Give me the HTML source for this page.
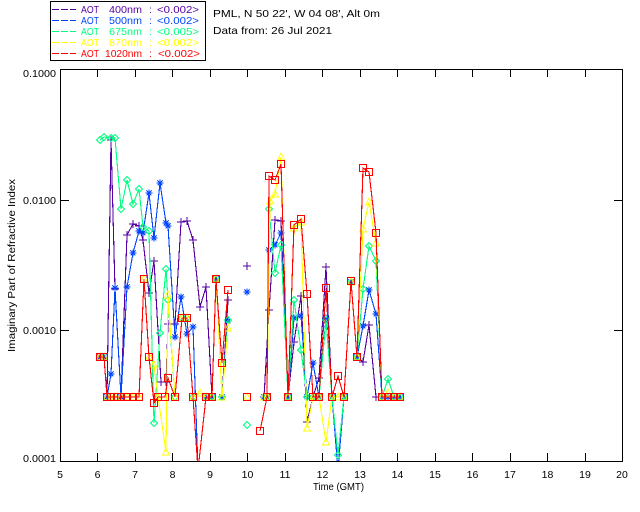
<!DOCTYPE html>
<html>
<head>
<meta charset="utf-8">
<style>
html,body{margin:0;padding:0;background:#fff;width:640px;height:512px;overflow:hidden}
svg{display:block}
text{font-family:"Liberation Sans",sans-serif;font-size:10.5px;fill:#000}
.a{shape-rendering:crispEdges}
.s{fill:none;stroke-width:1.1;stroke-linejoin:miter;shape-rendering:crispEdges}
.p{stroke:#5500a0;marker:url(#mp)}
.b{stroke:#0044ff;marker:url(#mb)}
.g{stroke:#00ff80;marker:url(#mg)}
.y{stroke:#ffff00;marker:url(#my)}
.r{stroke:#ff0000;marker:url(#mr)}
</style>
</head>
<body>
<svg width="640" height="512" viewBox="0 0 640 512" xmlns="http://www.w3.org/2000/svg">
<defs>
<clipPath id="c"><rect x="60" y="70" width="562" height="391"/></clipPath>
<marker id="mp" markerUnits="userSpaceOnUse" markerWidth="12" markerHeight="12" refX="6" refY="6" overflow="visible"><path d="M2 6H10M6 2V10" fill="none" stroke="#5500a0" stroke-width="1" shape-rendering="crispEdges"/></marker>
<marker id="mb" markerUnits="userSpaceOnUse" markerWidth="12" markerHeight="12" refX="6" refY="6" overflow="visible"><path d="M2.5 6H9.5M6 2.5V9.5M3.5 3.5L8.5 8.5M8.5 3.5L3.5 8.5" fill="none" stroke="#0044ff" stroke-width="1.2" shape-rendering="crispEdges"/></marker>
<marker id="mg" markerUnits="userSpaceOnUse" markerWidth="12" markerHeight="12" refX="6" refY="6" overflow="visible"><path d="M6 2.5L9.5 6L6 9.5L2.5 6Z" fill="none" stroke="#00ff80" stroke-width="1" shape-rendering="crispEdges"/></marker>
<marker id="my" markerUnits="userSpaceOnUse" markerWidth="12" markerHeight="12" refX="6" refY="6" overflow="visible"><path d="M6 2L9.5 9H2.5Z" fill="none" stroke="#ffff00" stroke-width="1" shape-rendering="crispEdges"/></marker>
<marker id="mr" markerUnits="userSpaceOnUse" markerWidth="12" markerHeight="12" refX="6" refY="6" overflow="visible"><rect x="2.5" y="2.5" width="7" height="7" fill="none" stroke="#ff0000" stroke-width="1" shape-rendering="crispEdges"/></marker>
</defs>

<!-- legend -->
<rect class="a" x="50.5" y="1.5" width="155" height="59" fill="#fff" stroke="#000" stroke-width="1"/>
<g class="a" fill="none" stroke-width="1" stroke-dasharray="7 2">
<path d="M52 9.5H76" stroke="#5500a0"/>
<path d="M52 20.5H76" stroke="#0044ff"/>
<path d="M52 31.5H76" stroke="#00ff80"/>
<path d="M52 42.5H76" stroke="#ffff00"/>
<path d="M52 53.5H76" stroke="#ff0000"/>
</g>
<g style="fill:#5500a0"><text style="fill:inherit" x="81" y="13" textLength="18" lengthAdjust="spacingAndGlyphs">AOT</text><text style="fill:inherit" x="109" y="13" textLength="33" lengthAdjust="spacingAndGlyphs">400nm</text><text style="fill:inherit" x="149" y="13">:</text><text style="fill:inherit" x="157" y="13" textLength="42" lengthAdjust="spacingAndGlyphs">&lt;0.002&gt;</text></g>
<g style="fill:#0044ff"><text style="fill:inherit" x="81" y="24" textLength="18" lengthAdjust="spacingAndGlyphs">AOT</text><text style="fill:inherit" x="109" y="24" textLength="33" lengthAdjust="spacingAndGlyphs">500nm</text><text style="fill:inherit" x="149" y="24">:</text><text style="fill:inherit" x="157" y="24" textLength="42" lengthAdjust="spacingAndGlyphs">&lt;0.002&gt;</text></g>
<g style="fill:#00ff80"><text style="fill:inherit" x="81" y="35" textLength="18" lengthAdjust="spacingAndGlyphs">AOT</text><text style="fill:inherit" x="109" y="35" textLength="33" lengthAdjust="spacingAndGlyphs">675nm</text><text style="fill:inherit" x="149" y="35">:</text><text style="fill:inherit" x="157" y="35" textLength="42" lengthAdjust="spacingAndGlyphs">&lt;0.005&gt;</text></g>
<g style="fill:#ffff00"><text style="fill:inherit" x="81" y="46" textLength="18" lengthAdjust="spacingAndGlyphs">AOT</text><text style="fill:inherit" x="109" y="46" textLength="33" lengthAdjust="spacingAndGlyphs">870nm</text><text style="fill:inherit" x="149" y="46">:</text><text style="fill:inherit" x="157" y="46" textLength="42" lengthAdjust="spacingAndGlyphs">&lt;0.002&gt;</text></g>
<g style="fill:#ff0000"><text style="fill:inherit" x="81" y="57" textLength="18" lengthAdjust="spacingAndGlyphs">AOT</text><text style="fill:inherit" x="105" y="57" textLength="37" lengthAdjust="spacingAndGlyphs">1020nm</text><text style="fill:inherit" x="149" y="57">:</text><text style="fill:inherit" x="158" y="57" textLength="42" lengthAdjust="spacingAndGlyphs">&lt;0.002&gt;</text></g>

<text x="213" y="17" textLength="167" lengthAdjust="spacingAndGlyphs">PML, N 50 22', W 04 08', Alt 0m</text>
<text x="213" y="34" textLength="119" lengthAdjust="spacingAndGlyphs">Data from: 26 Jul 2021</text>

<!-- data -->
<g clip-path="url(#c)">
<polyline class="s p" points="100,357 104,357 107,397 111,140 115,289 121,397 127,235 133,224 139,226 143,240 149,293 154,261 161,382 166,382 168,324 175,324 181,222 187,221 193,240 200,307 206,287 212,397 216,279 222,397 228,300"/>
<polyline class="s p" points="247,266 247,266"/>
<polyline class="s p" points="264,397 269,310 275,220 281,221 288,397 294,342 301,296 307,422 313,397 319,378 326,267 332,397 338,470 344,397 351,282 357,357 363,362 369,325 376,397 382,397 388,397 394,397 400,397"/>

<polyline class="s b" points="100,357 104,357 107,397 111,374 115,288 121,397 127,287 133,253 139,231 143,233 149,193 154,238 160,183 166,223 168,226 175,337 181,297 187,334 193,327 198,470 206,397 212,397 216,279 222,397 228,321"/>
<polyline class="s b" points="247,292 247,292"/>
<polyline class="s b" points="264,397 267,397 269,250 275,245 281,233 288,397 294,318 301,316 307,397 313,363 319,397 326,318 332,397 338,470 344,397 351,282 357,357 363,326 369,290 376,314 382,397 388,397 394,397 400,397"/>

<polyline class="s g" points="100,140 104,137 111,138 115,138 121,209 127,180 133,204 139,189 143,227 149,231 154,423 160,333 166,269 168,300 175,397 182,318 187,318 193,397 198,470 206,397 212,397 216,279 222,397 228,320"/>
<polyline class="s g" points="247,425 247,425"/>
<polyline class="s g" points="267,397 269,209 275,273 281,245 288,397 294,300 301,350 307,397 313,397 319,397 326,320 332,397 338,455 344,397 351,282 357,357 363,289 369,246 376,261 382,397 388,379 394,397 400,397"/>

<polyline class="s y" points="100,357 104,357 107,397 111,397 115,397 121,397 127,397 133,397 139,397 144,279 149,357 154,365 158,397 166,452 168,295 175,397 182,318 187,318 193,397 200,393 206,397 212,397 216,279 222,397 228,328"/>
<polyline class="s y" points="247,397 247,397"/>
<polyline class="s y" points="264,397 267,397 270,201 275,194 281,157 288,397 294,228 301,222 307,428 313,397 319,397 326,442 332,397 338,397 344,397 351,282 357,357 363,229 369,202 376,243 382,397 388,393 394,397 400,397"/>

<polyline class="s r" points="100,357 104,357 107,397 111,397 117,397 121,397 127,397 133,397 139,397 144,279 149,357 154,403 158,397 165,397 168,378 175,397 182,318 187,318 193,397 198,470 206,397 212,397 216,279 222,363 228,290"/>
<polyline class="s r" points="247,397 247,397"/>
<polyline class="s r" points="260,431 267,397 269,176 275,180 281,164 288,397 294,225 301,219 307,294 313,397 319,397 326,288 332,397 338,376 344,397 351,281 357,357 363,168 369,172 376,233 382,397 388,397 394,397 400,397"/>
</g>

<!-- axes -->
<path class="a" fill="none" stroke="#000" stroke-width="1" d="M60.5 69.5H622.5V461.5H60.5Z
M97.5 70V77M135.5 70V77M172.5 70V77M210.5 70V77M247.5 70V77M285.5 70V77M322.5 70V77M360.5 70V77M397.5 70V77M435.5 70V77M472.5 70V77M510.5 70V77M547.5 70V77M585.5 70V77
M97.5 461V453M135.5 461V453M172.5 461V453M210.5 461V453M247.5 461V453M285.5 461V453M322.5 461V453M360.5 461V453M397.5 461V453M435.5 461V453M472.5 461V453M510.5 461V453M547.5 461V453M585.5 461V453
M61 200.5H69M61 330.5H69M622 200.5H614M622 330.5H614"/>

<g>
<text x="23" y="77" textLength="33" lengthAdjust="spacingAndGlyphs">0.1000</text>
<text x="23" y="204" textLength="33" lengthAdjust="spacingAndGlyphs">0.0100</text>
<text x="23" y="334" textLength="33" lengthAdjust="spacingAndGlyphs">0.0010</text>
<text x="23" y="462" textLength="33" lengthAdjust="spacingAndGlyphs">0.0001</text>
</g>
<g text-anchor="middle">
<text x="60" y="478">5</text><text x="97.5" y="478">6</text><text x="135" y="478">7</text><text x="172.5" y="478">8</text><text x="210" y="478">9</text><text x="247.5" y="478">10</text><text x="285" y="478">11</text><text x="322.5" y="478">12</text><text x="360" y="478">13</text><text x="397.5" y="478">14</text><text x="435" y="478">15</text><text x="472.5" y="478">16</text><text x="510" y="478">17</text><text x="547.5" y="478">18</text><text x="585" y="478">19</text><text x="622" y="478">20</text>
</g>
<text x="313" y="490" textLength="51" lengthAdjust="spacingAndGlyphs">Time (GMT)</text>
<text transform="translate(15 352) rotate(-90)" x="0" y="0" textLength="173" lengthAdjust="spacingAndGlyphs">Imaginary Part of Refractive Index</text>
</svg>
</body>
</html>
